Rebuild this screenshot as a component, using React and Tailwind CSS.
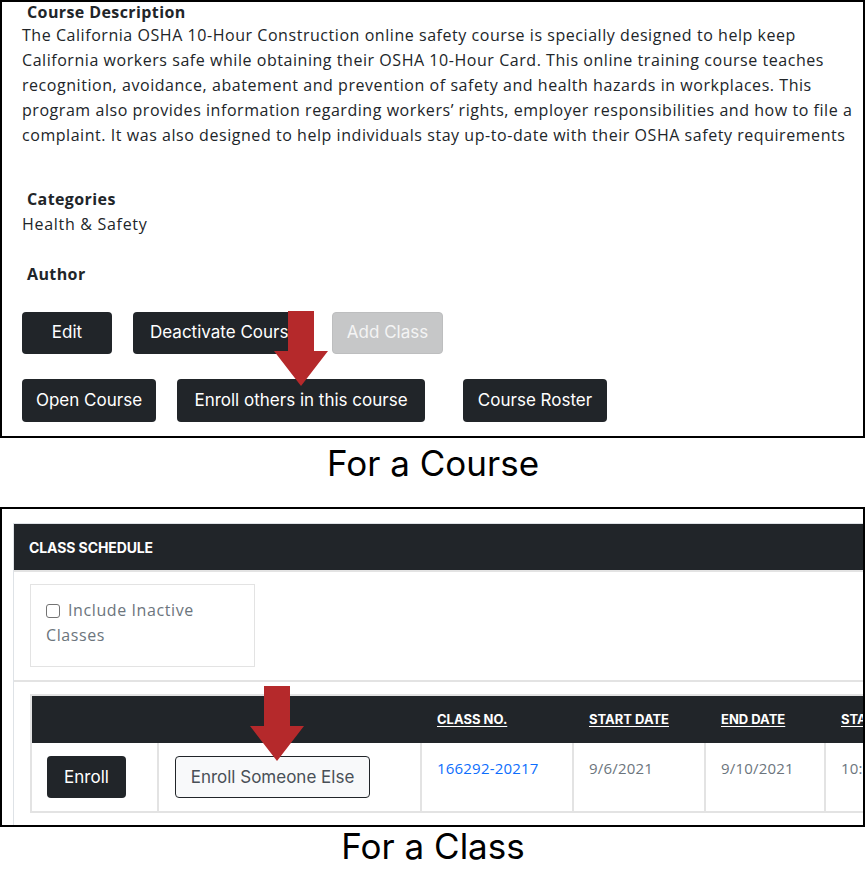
import React from "react";

const body = { fontFamily: '"Open Sans", "Noto Sans", sans-serif' };
const ui = { fontFamily: 'Inter, "Liberation Sans", sans-serif' };

function Arrow({ className }) {
  return (
    <svg className={className} width="54" height="76" viewBox="0 0 54 76">
      <polygon points="14,0 40,0 40,40 54,40 27,75 0,40 14,40" fill="#b5292b" />
    </svg>
  );
}

function DarkBtn({ children, className = "" }) {
  return (
    <div
      className={`flex shrink-0 items-center justify-center rounded-[4px] bg-[#212529] text-white text-[17px] font-normal ${className}`}
      style={ui}
    >
      {children}
    </div>
  );
}

export default function App() {
  return (
    <div className="w-[866px] h-[895px] bg-white text-[#212529]">
      {/* Course box */}
      <div className="relative w-[865px] h-[438px] border-2 border-black" style={body}>
        <div className="pl-[20px]">
          <div className="pl-[5px] font-bold text-[16px] leading-[20px] tracking-[0.4px]">Course Description</div>
          <div className="mt-[1px] text-[16px] leading-[25px] tracking-[0.55px] whitespace-nowrap">
            <div>The California OSHA 10-Hour Construction online safety course is specially designed to help keep</div>
            <div>California workers safe while obtaining their OSHA 10-Hour Card. This online training course teaches</div>
            <div>recognition, avoidance, abatement and prevention of safety and health hazards in workplaces. This</div>
            <div>program also provides information regarding workers’ rights, employer responsibilities and how to file a</div>
            <div>complaint. It was also designed to help individuals stay up-to-date with their OSHA safety requirements</div>
          </div>
          <div className="mt-[41px] pl-[5px] font-bold text-[16px] leading-[20px] tracking-[0.4px]">Categories</div>
          <div className="mt-[3px] text-[16px] leading-[25px] tracking-[0.7px]">Health &amp; Safety</div>
          <div className="mt-[27px] pl-[5px] font-bold text-[16px] leading-[20px] tracking-[0.4px]">Author</div>
          <div className="mt-[28px] flex items-center">
            <DarkBtn className="w-[90px] h-[42px]">Edit</DarkBtn>
            <DarkBtn className="ml-[21px] w-[178px] h-[42px] justify-start pl-[17px] overflow-hidden whitespace-nowrap">
              Deactivate Course
            </DarkBtn>
            <div
              className="ml-[21px] w-[111px] h-[42px] flex shrink-0 items-center justify-center rounded-[4px] bg-[#c6c7c8] border border-[#bdbebf] text-[#f4f4f4] text-[17px]"
              style={ui}
            >
              Add Class
            </div>
          </div>
          <div className="mt-[25px] flex items-center">
            <DarkBtn className="w-[134px] h-[43px]">Open Course</DarkBtn>
            <DarkBtn className="ml-[21px] w-[248px] h-[43px]">Enroll others in this course</DarkBtn>
            <DarkBtn className="ml-[38px] w-[144px] h-[43px]">Course Roster</DarkBtn>
          </div>
        </div>
        <Arrow className="absolute left-[272px] top-[309px]" />
      </div>

      <div className="h-[69px] flex items-start justify-center pt-[5px] leading-[40px] text-[35px] text-black" style={ui}>
        For a Course
      </div>

      {/* Class box */}
      <div className="relative w-[865px] h-[320px] border-2 border-black overflow-hidden">
        <div className="ml-[11px] mt-[14px] border-l border-t border-[#dee2e6] h-[320px]">
          <div className="h-[46px] bg-[#212529] flex items-center pl-[15px]">
            <span className="text-white font-bold text-[14px] tracking-[-0.1px]" style={ui}>
              CLASS SCHEDULE
            </span>
          </div>
          <div className="h-[2px] bg-[#e3e3e3]" />
          <div className="pt-[12px] pb-[13px] pl-[16px]">
            <div
              className="w-[225px] h-[83px] border border-[#e3e3e3] pl-[15px] pt-[13px] text-[16px] leading-[25px] tracking-[0.6px] text-[#6c757d]"
              style={body}
            >
              <div className="flex items-center">
                <input
                  type="checkbox"
                  readOnly
                  className="appearance-none w-[14px] h-[14px] border border-[#737373] rounded-[3px] bg-white mr-[8px]"
                />
                <span>Include Inactive</span>
              </div>
              <div>Classes</div>
            </div>
          </div>
          <div className="h-[2px] bg-[#e3e3e3]" />
          <div className="pt-[12px] pl-[16px]">
            <div className="border-2 border-[#e3e3e3] border-r-0 w-[960px]">
              <div className="flex h-[47px] bg-[#212529] text-white text-[13px] font-bold" style={ui}>
                <div className="w-[127px] shrink-0" />
                <div className="w-[263px] shrink-0" />
                <div className="w-[152px] shrink-0 pl-[15px] flex items-center"><span className="underline underline-offset-2">CLASS NO.</span></div>
                <div className="w-[132px] shrink-0 pl-[15px] flex items-center"><span className="underline underline-offset-2">START DATE</span></div>
                <div className="w-[120px] shrink-0 pl-[15px] flex items-center"><span className="underline underline-offset-2">END DATE</span></div>
                <div className="w-[140px] shrink-0 pl-[15px] flex items-center"><span className="underline underline-offset-2">START TIME</span></div>
              </div>
              <div className="flex h-[68px] text-[15px] leading-[24px] tracking-[0.2px]" style={body}>
                <div className="w-[127px] shrink-0 pl-[15px] pt-[13px] border-r-2 border-[#e3e3e3]">
                  <DarkBtn className="w-[79px] h-[42px] tracking-normal">Enroll</DarkBtn>
                </div>
                <div className="w-[263px] shrink-0 pl-[16px] pt-[13px] border-r-2 border-[#e3e3e3]">
                  <div
                    className="w-[195px] h-[42px] flex items-center justify-center rounded-[4px] bg-[#f8f9fa] border border-[#212529] text-[#495057] text-[17px] tracking-normal"
                    style={ui}
                  >
                    Enroll Someone Else
                  </div>
                </div>
                <div className="w-[152px] shrink-0 pl-[15px] pt-[13px] border-r-2 border-[#e3e3e3] text-[#0d6efd]">166292-20217</div>
                <div className="w-[132px] shrink-0 pl-[15px] pt-[13px] border-r-2 border-[#e3e3e3] text-[#6c757d]">9/6/2021</div>
                <div className="w-[120px] shrink-0 pl-[15px] pt-[13px] border-r-2 border-[#e3e3e3] text-[#6c757d]">9/10/2021</div>
                <div className="w-[140px] shrink-0 pl-[15px] pt-[13px] text-[#6c757d]">10:00 AM</div>
              </div>
            </div>
          </div>
        </div>
        <Arrow className="absolute left-[248px] top-[177px]" />
      </div>

      <div className="h-[66px] flex items-start justify-center leading-[38px] text-[35px] text-black" style={ui}>
        For a Class
      </div>
    </div>
  );
}
